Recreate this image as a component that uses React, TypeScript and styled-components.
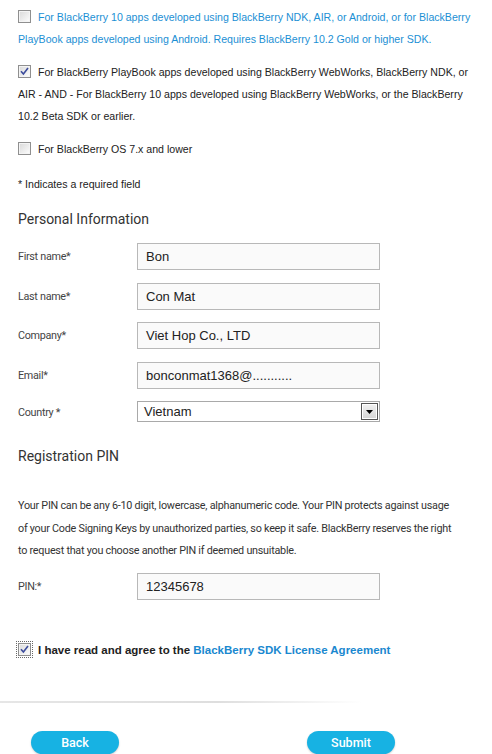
import React from 'react';
import styled, { createGlobalStyle } from 'styled-components';

const GlobalStyle = createGlobalStyle`
  html, body {
    margin: 0;
    padding: 0;
    background: #ffffff;
  }
  body {
    font-family: "Liberation Sans", Arial, sans-serif;
    color: #222;
  }
`;

const Page = styled.div`
  width: 492px;
  height: 754px;
  overflow: hidden;
  box-sizing: border-box;
  padding-top: 6px;
`;

const Section = styled.div`
  padding: 0 7px 0 18px;
`;

const Option = styled.p<{ $blue?: boolean }>`
  margin: 0 0 11px;
  font-size: 10.6px;
  line-height: 22px;
  color: ${(p) => (p.$blue ? '#1b8fd4' : '#222')};
`;

const Box = styled.span<{ $focus?: boolean }>`
  display: inline-block;
  box-sizing: border-box;
  width: 13px;
  height: 13px;
  margin-right: 7px;
  vertical-align: -2px;
  border: 1px solid #8f8f8f;
  background: linear-gradient(135deg, #d9d9d9 0%, #f2f2f2 70%, #ffffff 100%);
  box-shadow: inset 0 0 0 1px #f4f4f4;
  position: relative;
  outline: ${(p) => (p.$focus ? '1px dotted #666' : 'none')};
  outline-offset: 1px;
  svg {
    position: absolute;
    left: 1px;
    top: 1px;
  }
`;

const Check = ({ checked, focus }: { checked?: boolean; focus?: boolean }) => (
  <Box $focus={focus}>
    {checked && (
      <svg width="9" height="9" viewBox="0 0 9 9">
        <path d="M1 4.2 L3.4 7 L8 1" fill="none" stroke="#3c4c9c" strokeWidth="1.6" />
      </svg>
    )}
  </Box>
);

const Note = styled.p`
  margin: 13px 0 0;
  font-size: 10.6px;
  line-height: 22px;
  color: #222;
`;

const Heading = styled.h2<{ $top: number }>`
  margin: ${(p) => p.$top}px 0 0;
  font-family: Roboto, "Liberation Sans", sans-serif;
  font-weight: 400;
  font-size: 14px;
  line-height: 22px;
  color: #333;
`;

const Form = styled.div<{ $top: number }>`
  margin-top: ${(p) => p.$top}px;
  display: flex;
  flex-direction: column;
  gap: 12.5px;
`;

const Row = styled.label`
  display: grid;
  grid-template-columns: 119px 243px;
  align-items: center;
`;

const Label = styled.span<{ $drop?: number }>`
  font-family: Roboto, "Liberation Sans", sans-serif;
  font-size: 10.8px;
  letter-spacing: -0.3px;
  color: #444;
  position: relative;
  top: ${(p) => p.$drop || 0}px;
`;

const Field = styled.div`
  box-sizing: border-box;
  height: 27px;
  border: 1px solid #b8b8b8;
  background: #fafafa;
  padding: 0 8px;
  font-size: 13px;
  line-height: 25px;
  color: #222;
`;

const Select = styled.div`
  box-sizing: border-box;
  height: 21px;
  border: 1px solid #a9a9a9;
  background: #fff;
  display: flex;
  align-items: center;
  justify-content: space-between;
  padding: 0 1px 0 6px;
  font-size: 13px;
  color: #222;
`;

const Arrow = styled.span`
  box-sizing: border-box;
  width: 17px;
  height: 17px;
  border: 1px solid #555;
  box-shadow: inset 0 0 0 1px #fff;
  background: linear-gradient(#f2f2f2, #d4d4d4);
  display: flex;
  align-items: center;
  justify-content: center;
`;

const Para = styled.p`
  margin: 28px 0 0;
  font-family: Roboto, "Liberation Sans", sans-serif;
  font-size: 10.8px;
  letter-spacing: -0.25px;
  line-height: 22.5px;
  color: #333;
`;

const Agree = styled.p`
  margin: 39px 0 0;
  font-size: 11.5px;
  font-weight: 700;
  line-height: 22px;
  color: #222;
`;

const Link = styled.a`
  color: #1a88cf;
  text-decoration: none;
`;

const Divider = styled.div`
  margin-top: 40px;
  width: 362px;
  height: 2px;
  background: linear-gradient(90deg, #e6e6e6 0%, #dedede 60%, #ffffff 100%);
`;

const Buttons = styled.div`
  margin-top: 28px;
  display: flex;
  padding-left: 31px;
  gap: 188px;
`;

const Button = styled.button`
  width: 88px;
  height: 23px;
  border: none;
  border-radius: 12px;
  background: #17b2e3;
  box-shadow: 0 1px 2px rgba(0, 0, 0, 0.2);
  color: #fff;
  font-family: Roboto, "Liberation Sans", sans-serif;
  font-size: 12.5px;
  font-weight: 500;
  padding: 0;
  cursor: pointer;
`;

const fields = [
  { label: 'First name*', value: 'Bon' },
  { label: 'Last name*', value: 'Con Mat' },
  { label: 'Company*', value: 'Viet Hop Co., LTD' },
  { label: 'Email*', value: 'bonconmat1368@...........' },
];

export default function App() {
  return (
    <Page>
      <GlobalStyle />
      <Section>
        <Option $blue>
          <Check />
          For BlackBerry 10 apps developed using BlackBerry NDK, AIR, or Android, or for BlackBerry
          PlayBook apps developed using Android. Requires BlackBerry 10.2 Gold or higher SDK.
        </Option>
        <Option>
          <Check checked />
          For BlackBerry PlayBook apps developed using BlackBerry WebWorks, BlackBerry NDK, or AIR -
          AND - For BlackBerry 10 apps developed using BlackBerry WebWorks, or the BlackBerry 10.2
          Beta SDK or earlier.
        </Option>
        <Option>
          <Check />
          For BlackBerry OS 7.x and lower
        </Option>
        <Note>* Indicates a required field</Note>

        <Heading $top={13}>Personal Information</Heading>
        <Form $top={13}>
          {fields.map((f) => (
            <Row key={f.label}>
              <Label>{f.label}</Label>
              <Field>{f.value}</Field>
            </Row>
          ))}
          <Row>
            <Label $drop={1}>Country *</Label>
            <Select>
              Vietnam
              <Arrow>
                <svg width="7" height="4" viewBox="0 0 7 4">
                  <path d="M0 0 H7 L3.5 4 Z" fill="#000" />
                </svg>
              </Arrow>
            </Select>
          </Row>
        </Form>

        <Heading $top={23}>Registration PIN</Heading>
        <Para>
          Your PIN can be any 6-10 digit, lowercase, alphanumeric code. Your PIN protects against usage
          <br />
          of your Code Signing Keys by unauthorized parties, so keep it safe. BlackBerry reserves the right
          <br />
          to request that you choose another PIN if deemed unsuitable.
        </Para>
        <Form $top={10}>
          <Row>
            <Label>PIN:*</Label>
            <Field>12345678</Field>
          </Row>
        </Form>

        <Agree>
          <Check checked focus />
          I have read and agree to the <Link href="#">BlackBerry SDK License Agreement</Link>
        </Agree>
      </Section>
      <Divider />
      <Buttons>
        <Button>Back</Button>
        <Button>Submit</Button>
      </Buttons>
    </Page>
  );
}
